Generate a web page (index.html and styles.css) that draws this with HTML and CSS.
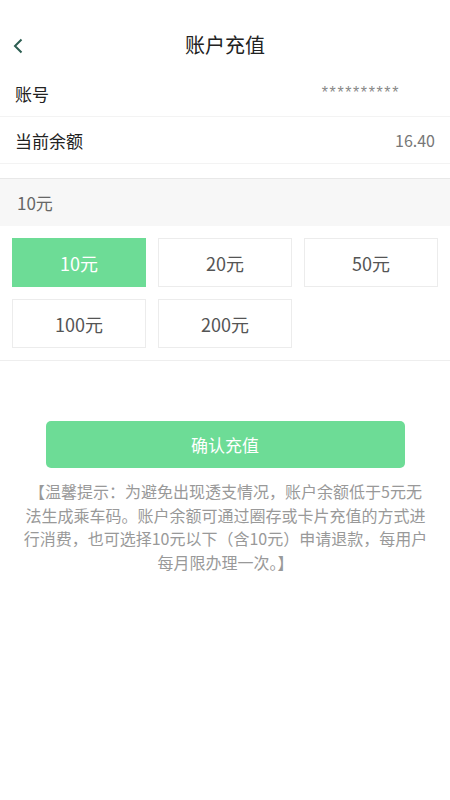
FILE: index.html
```html
<!DOCTYPE html>
<html lang="zh-CN">
<head>
<meta charset="utf-8">
<link rel="stylesheet" href="styles.css">
</head>
<body>
<div class="page">
  <header class="nav">
    <span class="back"><svg width="10" height="16" viewBox="0 0 10 16"><path d="M8.5 1.5 L2 8 L8.5 14.5" fill="none" stroke="#2d5e52" stroke-width="2"/></svg></span>
    <h1 class="title">账户充值</h1>
  </header>
  <div class="row"><span class="label">账号</span><span class="value masked">**********</span></div>
  <div class="row"><span class="label">当前余额</span><span class="value">16.40</span></div>
  <div class="amount-band">10元</div>
  <div class="options">
    <div class="opt active">10元</div>
    <div class="opt">20元</div>
    <div class="opt">50元</div>
    <div class="opt">100元</div>
    <div class="opt">200元</div>
  </div>
  <button class="confirm">确认充值</button>
  <p class="notice">【温馨提示：为避免出现透支情况，账户余额低于5元无法生成乘车码。账户余额可通过圈存或卡片充值的方式进行消费，也可选择10元以下（含10元）申请退款，每用户每月限办理一次。】</p>
</div>
</body>
</html>
```
FILE: styles.css
```css
* { box-sizing: border-box; }
html, body { margin: 0; padding: 0; background: #fff; }
body { font-family: "Noto Sans CJK SC", "Noto Sans", sans-serif; color: #333; }
.page { width: 450px; min-height: 800px; background: #fff; }
.nav { height: 70px; padding-top: 20px; display: flex; align-items: center; justify-content: center; position: relative; }
.back { position: absolute; left: 13px; top: 38px; width: 10px; height: 16px; display: flex; }
.title { margin: 0; font-size: 20px; font-weight: 400; color: #222; line-height: 50px; }
.row { height: 47px; display: flex; align-items: center; justify-content: space-between; padding: 0 15px; border-bottom: 1px solid #f3f3f3; }
.label { font-size: 17px; color: #222; }
.value { font-size: 16px; color: #777; }
.masked { margin-right: 35px; color: #888; font-family: "Liberation Sans", sans-serif; font-size: 16px; letter-spacing: 1.6px; }
.amount-band { margin-top: 14px; height: 48px; background: #f7f7f7; border-top: 1px solid #e8e8e8; padding-left: 17px; display: flex; align-items: center; font-size: 17px; color: #666; }
.options { display: grid; grid-template-columns: repeat(3, 134px); gap: 12px; padding: 12px; border-bottom: 1px solid #eeeeee; }
.opt { height: 49px; border: 1px solid #ececec; display: flex; align-items: center; justify-content: center; font-size: 18px; color: #555; }
.opt.active { background: #6ddc96; border-color: #6ddc96; color: #fff; }
.confirm { display: block; margin: 60px auto 0; width: 359px; height: 47px; border: none; border-radius: 5px; background: #6ddc96; color: #fff; font-family: inherit; font-size: 17px; }
.notice { margin: 12px 0 0; padding: 0 21px 0 22px; text-align: center; font-size: 16px; line-height: 23.5px; color: #999; }
```
